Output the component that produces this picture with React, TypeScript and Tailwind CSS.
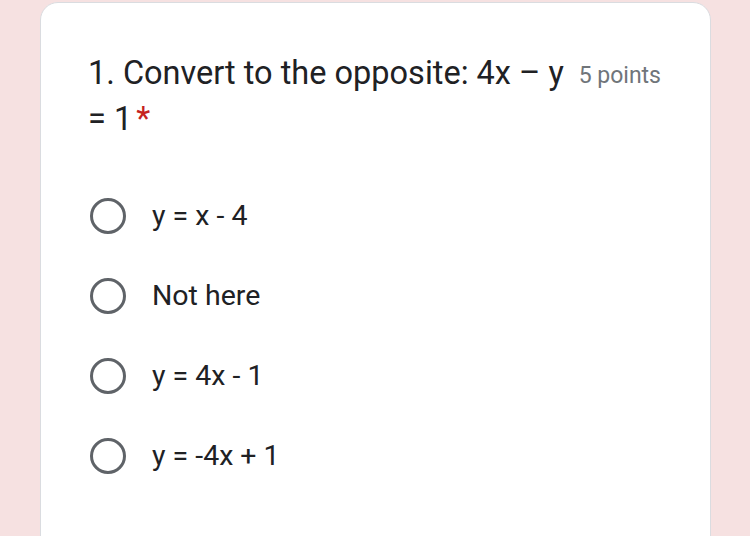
export default function App() {
  const options = ["y = x - 4", "Not here", "y = 4x - 1", "y = -4x + 1"];
  return (
    <div className="w-[750px] h-[536px] overflow-hidden bg-[#f6e1e1] font-['Roboto',sans-serif]">
      <div className="ml-[40px] mt-[2px] w-[671px] h-[560px] bg-white border border-[#dadce0] rounded-[18px] pl-[47px] pr-[49px] pt-[47px]">
        <div className="flex items-start gap-3">
          <div className="flex-1 text-[32.5px] leading-[46px] text-[#202124]">
            1. Convert to the opposite: 4x – y = 1
            <span className="text-[#c5221f] ml-1">*</span>
          </div>
          <div className="shrink-0 text-[23px] leading-[46px] text-[#70757a] pt-[3px]">5 points</div>
        </div>
        <div className="mt-[34px] flex flex-col">
          {options.map((o) => (
            <div key={o} className="h-[80px] flex items-center">
              <div className="w-[36px] h-[36px] ml-[2px] rounded-full border-[3.5px] border-[#5f6368] shrink-0" />
              <div className="ml-[26px] text-[28.5px] text-[#202124]">{o}</div>
            </div>
          ))}
        </div>
      </div>
    </div>
  );
}
